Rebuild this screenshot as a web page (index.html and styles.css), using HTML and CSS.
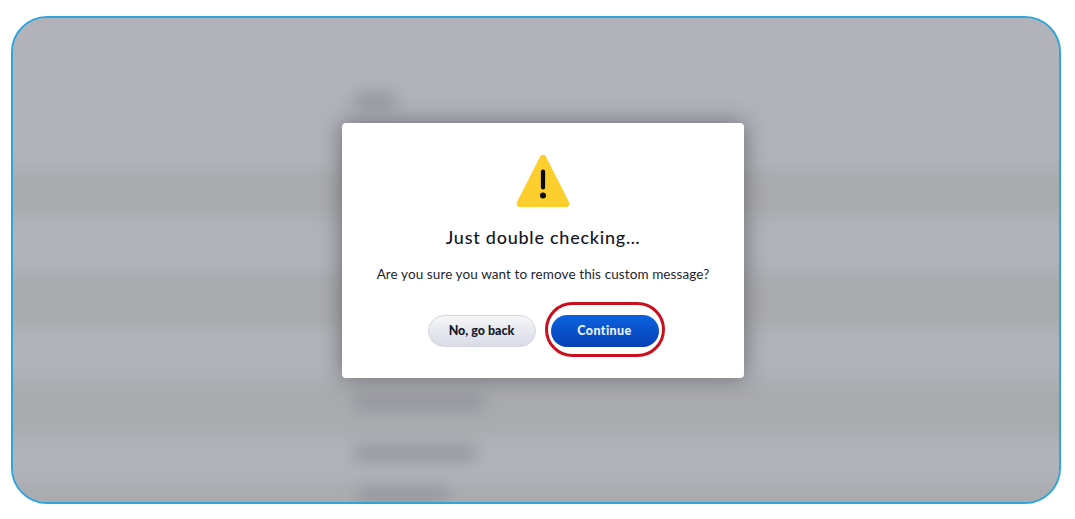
FILE: index.html
```html
<!DOCTYPE html>
<html lang="en">
<head>
<meta charset="utf-8">
<title>Just double checking</title>
<link rel="stylesheet" href="styles.css">
</head>
<body>
<main class="frame">
  <div class="backdrop" aria-hidden="true">
    <div class="band light h154"><span class="ghost g1"></span></div>
    <div class="band dark h47"></div>
    <div class="band light h56"></div>
    <div class="band dark h54"></div>
    <div class="band light h53"></div>
    <div class="band dark h57"><span class="ghost g2"></span></div>
    <div class="band light h46"><span class="ghost g3"></span></div>
    <div class="band dark h20"><span class="ghost g4"></span></div>
  </div>
  <div class="overlay">
    <section class="modal">
      <svg class="warn" viewBox="0 0 54 54" width="54" height="54" aria-hidden="true">
        <path d="M24.3 2.2a3.2 3.2 0 0 1 5.4 0l23.2 45.6c1.2 2.4.1 5.2-2.6 5.2H3.7C1 53-.1 50.2 1.1 47.8z" fill="#fccf2f"/>
        <rect x="24.9" y="15.5" width="4.2" height="20" rx="2.1" fill="#0a0a10"/>
        <circle cx="27" cy="41.6" r="3" fill="#0a0a10"/>
      </svg>
      <h1 class="title">Just double checking…</h1>
      <p class="text">Are you sure you want to remove this custom message?</p>
      <div class="actions">
        <button class="btn secondary" type="button">No, go back</button>
        <span class="highlight"><button class="btn primary" type="button">Continue</button></span>
      </div>
    </section>
  </div>
</main>
</body>
</html>
```
FILE: styles.css
```css
* { box-sizing: border-box; }
html, body { margin: 0; height: 100%; background: #fff; }
body { padding: 16px 14px 15px 11px; font-family: Lato, "Noto Sans", sans-serif; }
.frame {
  position: relative;
  height: 488px;
  border: 2px solid #2ea6dc;
  border-radius: 36px;
  overflow: hidden;
  background: #b2b3ba;
}
.backdrop { display: flex; flex-direction: column; height: 100%; margin: 0 -20px; filter: blur(8px); }
.band { position: relative; flex: none; }
.light { background: #b2b3ba; }
.dark { background: #aaabaf; }
.h154 { height: 152px; }
.h47 { height: 47px; }
.h56 { height: 56px; }
.h54 { height: 54px; }
.h53 { height: 53px; }
.h57 { height: 57px; }
.h46 { height: 46px; }
.h20 { height: 40px; }
.ghost { position: absolute; display: block; height: 15px; background: #94959c; border-radius: 6px; }
.g1 { left: 360px; top: 75px; width: 44px; }
.g2 { left: 360px; top: 15px; width: 132px; }
.g3 { left: 360px; top: 9px; width: 124px; }
.g4 { left: 364px; top: 4px; width: 92px; }
.overlay {
  position: absolute;
  inset: 0;
  display: flex;
  align-items: flex-start;
  justify-content: center;
  padding: 105px 0 0 14px;
}
.modal {
  width: 402px;
  height: 255px;
  display: flex;
  flex-direction: column;
  align-items: center;
  padding-top: 31px;
  background: #fff;
  border-radius: 4px;
  box-shadow: 0 0 22px rgba(40, 40, 45, .5);
}
.warn { display: block; flex: none; }
.title {
  margin: 16px 0 0;
  font-size: 18px;
  line-height: 26px;
  font-weight: 500;
  letter-spacing: .75px;
  color: #14161f;
}
.text {
  margin: 14px 0 0;
  font-size: 13.5px;
  line-height: 20px;
  font-weight: 400;
  letter-spacing: .1px;
  color: #23252e;
}
.actions { display: flex; align-items: center; gap: 9px; margin: 18px 0 0 6px; }
.btn {
  width: 108px;
  height: 32px;
  padding: 0;
  border-radius: 16px;
  font-family: inherit;
  font-size: 12.5px;
  font-weight: 900;
  letter-spacing: .4px;
}
.secondary {
  margin-top: 2px;
  border: 1px solid #d5d7de;
  background: linear-gradient(#f6f6f9, #d9dbe6);
  color: #171a2b;
  letter-spacing: 0;
}
.primary {
  border: 0;
  background: linear-gradient(#0c63e0, #0640b4);
  color: #eaf1ff;
}
.highlight {
  display: flex;
  align-items: center;
  justify-content: center;
  width: 120px;
  height: 55px;
  padding-top: 2px;
  border: 3px solid #c9101f;
  border-radius: 28px;
}
```
